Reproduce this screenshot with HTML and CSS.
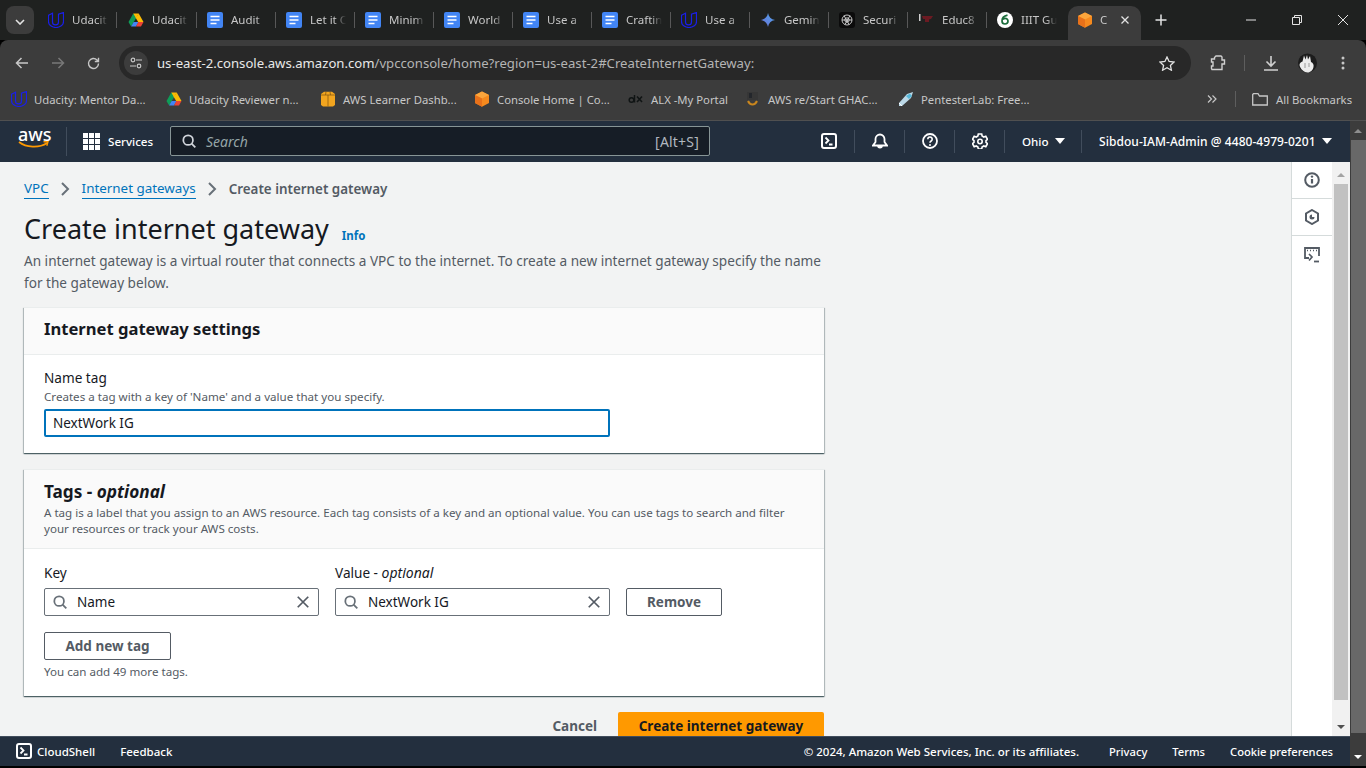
FILE: index.html
```html
<!DOCTYPE html>
<html lang="en">
<head>
  <meta charset="UTF-8" />
  <title>Create internet gateway | VPC Console</title>
  <link rel="stylesheet" href="styles.css">
</head>
<body>
  <svg class="defs" width="0" height="0">
    <symbol id="udacity" viewBox="0 0 16 16"><path d="M.5 3.200 4.500 1.200V10c0 1.700 1.300 2.900 3 2.900S10.500 11.700 10.500 10V2.200L15.500.5V9.500c0 3.500-3.400 6-7.500 6s-7.500-2.500-7.500-6zM4.500 10.500V3M10.500 9.500V3" fill="none" stroke="#1a1fe8" stroke-width="1.200"/></symbol>
    <symbol id="drive" viewBox="0 0 16 16"><path d="M5.300 1.500h5.400L8 6.300 5.300 6z" fill="#fbbc04"/><path d="M5.300 1.500 0.500 10l2.600 4.400L8 6.200z" fill="#0f9d58"/><path d="M10.700 1.500 15.500 10h-5.300L7.600 5.800z" fill="#fbbc04"/><path d="M3.100 14.400h4.900l2.700-4.400H5.600z" fill="#4285f4"/><path d="M15.500 10h-5.200L8 14.400h5z" fill="#ea4335"/></symbol>
    <symbol id="docs" viewBox="0 0 16 16"><rect width="16" height="16" rx="2" fill="#4285f4"/><path d="M3.500 4.500h9M3.500 8h9M3.500 11.500h6" stroke="#fff" stroke-width="1.600"/></symbol>
    <symbol id="gemini" viewBox="0 0 16 16"><defs><linearGradient id="gem" x1="0" y1="1" x2="1" y2="0"><stop offset="0" stop-color="#6b6fd4"/><stop offset="1" stop-color="#4fa6ee"/></linearGradient></defs><path d="M8 1c.6 3.800 3 6.300 7 7-4 .7-6.400 3.200-7 7-.6-3.800-3-6.300-7-7 4-.7 6.400-3.200 7-7z" fill="url(#gem)"/></symbol>
    <symbol id="openai" viewBox="0 0 16 16"><rect width="16" height="16" rx="3" fill="#0b0b0b"/><g fill="none" stroke="#d8d8d8" stroke-width=".9"><circle cx="8" cy="8" r="5"/><circle cx="8" cy="8" r="2.200"/><path d="M5 3.500 10 12.500M11 3.500 6 12.500M3 8h10"/></g></symbol>
    <symbol id="educ" viewBox="0 0 16 16"><path d="M1 2h1.500v7H1z" fill="#cfcfcf"/><path d="M4 4h11l-2 3-2 .5V10H7V7H5z" fill="#6b1a22"/></symbol>
    <symbol id="iiit" viewBox="0 0 16 16"><circle cx="8" cy="8" r="8" fill="#fff"/><path d="M10.500 3.200C7 4 5 6.500 5 9c0 1.700 1.200 3 3 3s3-1.300 3-2.900-1.200-2.700-2.800-2.700c-1 0-1.800.5-2.200 1.200" fill="none" stroke="#1c6d3c" stroke-width="1.700"/></symbol>
    <symbol id="cube" viewBox="0 0 16 16"><path d="M8 .5 15 4v8l-7 3.700L1 12V4z" fill="#f68a1e"/><path d="M8 .5 15 4 8 7.600 1 4z" fill="#fba53c"/><path d="M8 7.600V15.700L1 12V4z" fill="#e8711a"/></symbol>
    <symbol id="box" viewBox="0 0 16 16"><path d="M1 3 4 .8h8L15 3v11l-2 1.500H3L1 14z" fill="#f2a51f"/><path d="M1 4h14M8 4v11.500M6 .8 5.500 4M10 .8l.5 3.200" stroke="#8a5a10" stroke-width=".8" fill="none"/></symbol>
    <symbol id="alx" viewBox="0 0 16 16"><circle cx="3.500" cy="9" r="2.300" fill="none" stroke="#101414" stroke-width="1.500"/><path d="M6.500 4v7.500" stroke="#101414" stroke-width="1.500"/><path d="M9 5.500 14 11M14 5.500 9 11" stroke="#101414" stroke-width="1.600"/></symbol>
    <symbol id="restart" viewBox="0 0 16 16"><rect x="2" y="1" width="11" height="8" fill="#363636"/><path d="M4 2h3v5H4z" fill="#23262b"/><path d="M3 10c2 4.500 7 4.500 9 0" fill="none" stroke="#c9861e" stroke-width="2"/></symbol>
    <symbol id="pentester" viewBox="0 0 16 16"><path d="M15 1 13 7 4 15 1 15 1 12 9 3z" fill="#bcd9e8"/><path d="M12 2.500 14 5 11 8 8 5z" fill="#56b7d8"/><path d="M1 12 4 15" stroke="#fff"/></symbol>
    <symbol id="search" viewBox="0 0 16 16"><circle cx="7" cy="7" r="5.500" fill="none" stroke="currentColor" stroke-width="2"/><path d="m11 11 4.200 4.200" stroke="currentColor" stroke-width="2"/></symbol>
    <symbol id="clear" viewBox="0 0 16 16"><path d="m2 2 12 12M14 2 2 14" stroke="currentColor" stroke-width="2"/></symbol>
    <symbol id="shell" viewBox="0 0 16 16"><rect x="1" y="1" width="14" height="14" rx="2" fill="none" stroke="currentColor" stroke-width="2"/><path d="m4.500 4.500 3 3-3 3M8 11.500h3.500" fill="none" stroke="currentColor" stroke-width="1.800"/></symbol>
  </svg>

  <!-- browser tabs -->
  <div class="tabstrip">
    <button class="tab-menu"><svg width="10" height="6" viewBox="0 0 10 6"><path d="m1 1 4 4 4-4" fill="none" stroke="#e3e3e3" stroke-width="1.600"/></svg></button>
    <div class="tab tab-first"><svg class="fav"><use href="#udacity"/></svg><span class="tab-title">Udacit</span></div>
    <div class="tab"><svg class="fav"><use href="#drive"/></svg><span class="tab-title">Udacit</span></div>
    <div class="tab"><svg class="fav"><use href="#docs"/></svg><span class="tab-title">Audit</span></div>
    <div class="tab"><svg class="fav"><use href="#docs"/></svg><span class="tab-title">Let it C</span></div>
    <div class="tab"><svg class="fav"><use href="#docs"/></svg><span class="tab-title">Minim</span></div>
    <div class="tab"><svg class="fav"><use href="#docs"/></svg><span class="tab-title">World</span></div>
    <div class="tab"><svg class="fav"><use href="#docs"/></svg><span class="tab-title">Use a</span></div>
    <div class="tab"><svg class="fav"><use href="#docs"/></svg><span class="tab-title">Craftin</span></div>
    <div class="tab"><svg class="fav"><use href="#udacity"/></svg><span class="tab-title">Use a</span></div>
    <div class="tab"><svg class="fav"><use href="#gemini"/></svg><span class="tab-title">Gemin</span></div>
    <div class="tab"><svg class="fav"><use href="#openai"/></svg><span class="tab-title">Securi</span></div>
    <div class="tab"><svg class="fav"><use href="#educ"/></svg><span class="tab-title">Educ8</span></div>
    <div class="tab tab-last"><svg class="fav"><use href="#iiit"/></svg><span class="tab-title">IIIT Gu</span></div>
    <div class="tab tab-active"><svg class="fav"><use href="#cube"/></svg><span class="tab-title">C</span><svg class="tab-close" width="8" height="8" viewBox="0 0 8 8"><path d="m.5.5 7 7M7.500.5l-7 7" stroke="#e3e3e3" stroke-width="1.300"/></svg></div>
    <svg class="new-tab" width="12" height="12" viewBox="0 0 12 12"><path d="M6 .5v11M.5 6h11" stroke="#e3e3e3" stroke-width="1.500"/></svg>
    <div class="win-buttons">
      <svg width="10" height="10" viewBox="0 0 10 10"><path d="M0 5h10" stroke="#e3e3e3"/></svg>
      <svg width="10" height="10" viewBox="0 0 10 10"><path d="M.5 2.500h7v7h-7zM2.500 2.500V.5h7v7h-2" fill="none" stroke="#e3e3e3"/></svg>
      <svg width="10" height="10" viewBox="0 0 10 10"><path d="m0 0 10 10M10 0 0 10" stroke="#e3e3e3"/></svg>
    </div>
  </div>

  <!-- address bar -->
  <div class="toolbar">
    <svg class="tool" width="14" height="12" viewBox="0 0 14 12"><path d="M13 6H1.500M6.500 1l-5 5 5 5" fill="none" stroke="#c7c7c7" stroke-width="1.500"/></svg>
    <svg class="tool" width="14" height="12" viewBox="0 0 14 12"><path d="M1 6h11.500M7.500 1l5 5-5 5" fill="none" stroke="#787878" stroke-width="1.500"/></svg>
    <svg class="tool" width="13" height="13" viewBox="0 0 13 13"><path d="M11.500 6.500a5 5 0 1 1-1.500-3.600L11.500 4.500M11.500.8v3.700H7.800" fill="none" stroke="#c7c7c7" stroke-width="1.400"/></svg>
    <div class="omnibox">
      <span class="site-info"><svg width="12" height="12" viewBox="0 0 12 12"><g fill="none" stroke="#c7c7c7" stroke-width="1.200"><circle cx="3" cy="3" r="1.800"/><path d="M6 3h6M0 9h6"/><circle cx="9" cy="9" r="1.800"/></g></svg></span>
      <span class="url"><b>us-east-2.console.aws.amazon.com</b>/vpcconsole/home?region=us-east-2#CreateInternetGateway:</span>
      <svg class="star" width="16" height="15" viewBox="0 0 16 15"><path d="m8 1 2.100 4.500 4.900.6-3.600 3.300 1 4.800L8 11.800l-4.400 2.400 1-4.800L1 6.100l4.900-.6z" fill="none" stroke="#e3e3e3" stroke-width="1.300"/></svg>
    </div>
    <svg class="ext" width="16" height="16" viewBox="0 0 16 16"><path d="M1.500 4h3V2.500L6 1h5l1 1v3h2.500v4H12v5.500H2l-.5-1V11H3V7H1.500z" fill="none" stroke="#d0d0d0" stroke-width="1.400"/></svg>
    <span class="tool-sep"></span>
    <svg class="dl" width="16" height="16" viewBox="0 0 16 16"><path d="M8 1v9.500M3.500 6.500 8 11l4.500-4.500M1 15h14" fill="none" stroke="#d0d0d0" stroke-width="1.600"/></svg>
    <svg class="avatar" width="19" height="20" viewBox="0 0 19 20"><circle cx="9.500" cy="10" r="9.500" fill="#1c1c1c"/><path d="M1.500 12c0-2 1.500-3 3-3.500L6 2.500l1.500 4L9 2l1 4.500L12 3l1 6c2 1 3 2.500 2.500 5-.5 3-3 5.500-6 5.500S2 16 1.500 12z" fill="#ececec"/><path d="M7 10v5M11 10v4" stroke="#9a9a9a"/></svg>
    <svg class="dots" width="4" height="14" viewBox="0 0 4 14"><circle cx="2" cy="2" r="1.500" fill="#c7c7c7"/><circle cx="2" cy="7" r="1.500" fill="#c7c7c7"/><circle cx="2" cy="12" r="1.500" fill="#c7c7c7"/></svg>
  </div>

  <!-- bookmarks -->
  <div class="bookmarks">
    <a class="bm bm-mentor"><svg class="fav"><use href="#udacity"/></svg>Udacity: Mentor Da...</a>
    <a class="bm bm-reviewer"><svg class="fav"><use href="#drive"/></svg>Udacity Reviewer n...</a>
    <a class="bm bm-learner"><svg class="fav"><use href="#box"/></svg>AWS Learner Dashb...</a>
    <a class="bm bm-console"><svg class="fav"><use href="#cube"/></svg>Console Home | Co...</a>
    <a class="bm bm-alx"><svg class="fav"><use href="#alx"/></svg>ALX -My Portal</a>
    <a class="bm bm-restart"><svg class="fav"><use href="#restart"/></svg>AWS re/Start GHAC...</a>
    <a class="bm bm-pentester"><svg class="fav"><use href="#pentester"/></svg>PentesterLab: Free...</a>
    <svg class="bm-more" width="10" height="8" viewBox="0 0 10 8"><path d="m1 .5 3.500 3.500L1 7.500M5.500.5 9 4 5.500 7.500" fill="none" stroke="#c7c7c7" stroke-width="1.200"/></svg>
    <span class="bm-sep"></span>
    <a class="bm bm-all"><svg width="16" height="13" viewBox="0 0 16 13"><path d="M.7 1.500.7 12h14.600V3H7.500L6 .7H1.500z" fill="none" stroke="#c7c7c7" stroke-width="1.300"/></svg>All Bookmarks</a>
  </div>

  <div class="viewport">
    <div class="console">
      <!-- AWS top nav -->
      <header class="topnav">
        <div class="aws-logo">
          <span>aws</span>
          <svg width="31" height="8" viewBox="0 0 31 8"><path d="M1 1c7 5.500 20 6.500 28 1" fill="none" stroke="#f90" stroke-width="1.700"/><path d="m25.500.8 4.500-.2-1.200 4.200" fill="none" stroke="#f90" stroke-width="1.400"/></svg>
        </div>
        <div class="services">
          <span class="grid-icon"><i></i><i></i><i></i><i></i><i></i><i></i><i></i><i></i><i></i></span>
          Services
        </div>
        <div class="nav-search">
          <svg width="14" height="14"><use href="#search"/></svg>
          <em>Search</em>
          <span class="shortcut">[Alt+S]</span>
        </div>
        <div class="nav-icon nav-first"><svg width="16" height="16"><use href="#shell"/></svg></div>
        <div class="nav-icon">
          <svg width="16" height="16" viewBox="0 0 16 16"><path d="M1 12.500h14L12.500 9V6a4.500 4.500 0 0 0-9 0v3zM6 12.500a2 2 0 0 0 4 0" fill="none" stroke="#fff" stroke-width="1.800"/></svg>
        </div>
        <div class="nav-icon">
          <svg width="16" height="16" viewBox="0 0 16 16"><circle cx="8" cy="8" r="7" fill="none" stroke="#fff" stroke-width="1.800"/><path d="M5.800 6.200a2.200 2.200 0 1 1 3.400 1.800c-.8.500-1.200 1-1.200 1.800" fill="none" stroke="#fff" stroke-width="1.600"/><circle cx="8" cy="12" r="1" fill="#fff"/></svg>
        </div>
        <div class="nav-icon">
          <svg width="16" height="16" viewBox="0 0 16 16"><path d="m6.300 1h3.400l.4 2 1.700 1 2-.7 1.700 3-1.500 1.300v1.800l1.500 1.300-1.700 3-2-.7-1.700 1-.4 2H6.300l-.4-2-1.700-1-2 .7-1.700-3 1.500-1.300V7.600L.5 6.300l1.700-3 2 .7 1.700-1z" fill="none" stroke="#fff" stroke-width="1.600"/><circle cx="8" cy="8.500" r="2.200" fill="none" stroke="#fff" stroke-width="1.600"/></svg>
        </div>
        <div class="nav-menu nav-region">Ohio<span class="caret"></span></div>
        <div class="nav-menu nav-account">Sibdou-IAM-Admin @ 4480-4979-0201<span class="caret"></span></div>
      </header>

      <div class="workspace">
        <main class="content">
          <nav class="crumbs">
            <a>VPC</a>
            <svg width="9" height="14" viewBox="0 0 9 14"><path d="m1 1 6 6-6 6" fill="none" stroke="#687078" stroke-width="2"/></svg>
            <a>Internet gateways</a>
            <svg width="9" height="14" viewBox="0 0 9 14"><path d="m1 1 6 6-6 6" fill="none" stroke="#687078" stroke-width="2"/></svg>
            <span>Create internet gateway</span>
          </nav>

          <div class="page-head">
            <h1>Create internet gateway</h1>
            <a class="info">Info</a>
          </div>
          <p class="page-desc">An internet gateway is a virtual router that connects a VPC to the internet. To create a new internet gateway specify the name for the gateway below.</p>

          <section class="card">
            <div class="card-head">
              <h2>Internet gateway settings</h2>
            </div>
            <div class="card-body body-settings">
              <label class="field-label">Name tag</label>
              <div class="field-hint">Creates a tag with a key of 'Name' and a value that you specify.</div>
              <input class="text-input focused" type="text" value="NextWork IG">
            </div>
          </section>

          <section class="card">
            <div class="card-head head-tags">
              <h2>Tags - <em>optional</em></h2>
              <p>A tag is a label that you assign to an AWS resource. Each tag consists of a key and an optional value. You can use tags to search and filter your resources or track your AWS costs.</p>
            </div>
            <div class="card-body body-tags">
              <div class="tag-row">
                <div class="tag-col">
                  <label class="field-label">Key</label>
                  <div class="search-input">
                    <svg width="14" height="14"><use href="#search"/></svg>
                    <span>Name</span>
                    <svg class="clear" width="14" height="14"><use href="#clear"/></svg>
                  </div>
                </div>
                <div class="tag-col">
                  <label class="field-label">Value - <em>optional</em></label>
                  <div class="search-input">
                    <svg width="14" height="14"><use href="#search"/></svg>
                    <span>NextWork IG</span>
                    <svg class="clear" width="14" height="14"><use href="#clear"/></svg>
                  </div>
                </div>
                <button class="btn btn-remove">Remove</button>
              </div>
              <button class="btn btn-add">Add new tag</button>
              <div class="more-hint">You can add 49 more tags.</div>
            </div>
          </section>

          <div class="form-actions">
            <a class="cancel">Cancel</a>
            <button class="btn-primary">Create internet gateway</button>
          </div>
        </main>

        <aside class="tools-panel">
          <div class="panel-icon">
            <svg width="16" height="16" viewBox="0 0 16 16"><circle cx="8" cy="8" r="6.800" fill="none" stroke="#545b64" stroke-width="2"/><path d="M8 7v4.500" stroke="#545b64" stroke-width="2.200"/><circle cx="8" cy="4.600" r="1.200" fill="#545b64"/></svg>
          </div>
          <div class="panel-icon">
            <svg width="16" height="16" viewBox="0 0 16 16"><path d="M8 1 14 4.500v7L8 15l-6-3.500v-7z" fill="none" stroke="#545b64" stroke-width="2"/><path d="M8 5.500a2.500 2.500 0 1 0 2.500 2.500H8z" fill="#545b64"/></svg>
          </div>
          <div class="panel-icon panel-last">
            <svg width="16" height="16" viewBox="0 0 16 16"><path d="M5 11H1V1h14v8" fill="none" stroke="#545b64" stroke-width="1.800"/><path d="M3 3.500h1M6 3.500h1M9 3.500h1M12 3.500h1" stroke="#545b64" stroke-width="1.500"/><path d="m5 7 3 3-3 3.500" fill="none" stroke="#545b64" stroke-width="1.700"/><path d="M10 14.500h5" stroke="#545b64" stroke-width="1.800"/></svg>
          </div>
        </aside>

        <div class="inner-scroll">
          <span class="arrow-up"></span>
          <span class="inner-thumb"></span>
          <span class="arrow-down"></span>
        </div>
      </div>

      <footer class="footer">
        <a class="foot-shell"><svg width="16" height="16"><use href="#shell"/></svg>CloudShell</a>
        <a class="foot-feedback">Feedback</a>
        <span class="foot-copy">© 2024, Amazon Web Services, Inc. or its affiliates.</span>
        <a class="foot-link">Privacy</a>
        <a class="foot-link">Terms</a>
        <a class="foot-link">Cookie preferences</a>
      </footer>
    </div>

    <div class="outer-scroll">
      <span class="outer-up"></span>
      <span class="outer-thumb"></span>
      <span class="outer-down"></span>
    </div>
  </div>
  <div class="bottom-edge"></div>
</body>
</html>
```

FILE: styles.css
```css
* {
  box-sizing: border-box;
}

html,
body {
  margin: 0;
  height: 768px;
  overflow: hidden;
}

body {
  display: flex;
  flex-direction: column;
  background-color: #000;
  font-family: 'Noto Sans', 'Open Sans', sans-serif;
}

.defs {
  position: absolute;
}

.fav {
  width: 16px;
  height: 16px;
  flex: none;
}

/* tabs */
.tabstrip {
  height: 40px;
  flex: none;
  display: flex;
  align-items: center;
  padding-left: 6px;
  background-color: #1f2120;
  color: #c7c7c7;
  font-size: 11.5px;
}

.tab-menu {
  width: 28px;
  height: 28px;
  margin-right: 6px;
  padding: 0;
  border: none;
  border-radius: 8px;
  background-color: #3c3c3c;
}

.tab {
  width: 79px;
  height: 40px;
  flex: none;
  display: flex;
  align-items: center;
  padding-left: 8px;
  gap: 8px;
  position: relative;
}

.tab-first {
  width: 80px;
}

.tab::after {
  content: '';
  position: absolute;
  right: 2px;
  top: 12px;
  height: 16px;
  width: 1px;
  background-color: #585858;
}

.tab-first::after {
  right: 3px;
}

.tab-last::after,
.tab-active::after {
  display: none;
}

.tab-title {
  width: 36px;
  padding-bottom: 2px;
  white-space: nowrap;
  -webkit-mask-image: linear-gradient(to right, #000 70%, transparent);
  mask-image: linear-gradient(to right, #000 70%, transparent);
}

.tab-active {
  width: 73px;
  margin-top: 6px;
  height: 34px;
  padding: 0 0 6px 9px;
  gap: 7px;
  background-color: #3c3c3c;
  border-radius: 10px 10px 0 0;
}

.tab-active .tab-title {
  width: 9px;
}

.tab-close {
  margin-left: 5px;
  flex: none;
}

.new-tab {
  margin-left: 14px;
}

.win-buttons {
  margin-left: auto;
  display: flex;
  gap: 36px;
  padding-right: 18px;
}

/* address bar */
.toolbar {
  height: 44px;
  flex: none;
  display: flex;
  align-items: center;
  padding: 2px 0 0 15px;
  background-color: #3c3c3c;
  border-radius: 8px 8px 0 0;
}

.tool {
  margin-right: 22px;
  flex: none;
}

.omnibox {
  width: 1072px;
  height: 34px;
  margin-left: -3px;
  display: flex;
  align-items: center;
  padding: 0 16px 0 5px;
  background-color: #282828;
  border-radius: 17px;
}

.site-info {
  width: 24px;
  height: 24px;
  display: flex;
  align-items: center;
  justify-content: center;
  background-color: #3c3c3c;
  border-radius: 50%;
  margin-right: 9px;
}

.url {
  color: #b4b4b4;
  font-size: 13.15px;
  white-space: nowrap;
  flex: 1;
}

.url b {
  color: #e8e8e8;
  font-weight: 400;
}

.ext {
  margin-left: 19px;
}

.tool-sep {
  width: 1px;
  height: 16px;
  margin: 0 18px;
  background-color: #5e5e5e;
}

.avatar {
  margin-left: 19px;
}

.dots {
  margin-left: 24px;
}

/* bookmarks bar */
.bookmarks {
  height: 37px;
  flex: none;
  display: flex;
  align-items: center;
  padding: 0 0 6px 11px;
  background-color: #3c3c3c;
  border-bottom: 1px solid #505050;
  color: #c7c7c7;
  font-size: 11.3px;
}

.bm {
  display: flex;
  align-items: center;
  gap: 7px;
  white-space: nowrap;
  flex: none;
}

.bm-mentor { width: 155px; }
.bm-reviewer { width: 154px; }
.bm-learner { width: 154px; }
.bm-console { width: 154px; }
.bm-alx { width: 117px; }
.bm-restart { width: 153px; }
.bm-pentester { width: 309px; }

.bm-more {
  flex: none;
}

.bm-sep {
  width: 1px;
  height: 16px;
  margin: 0 16px 0 18px;
  background-color: #5e5e5e;
}

.bm-all {
  gap: 8px;
}

/* page frame */
.viewport {
  flex: 1;
  min-height: 0;
  display: flex;
}

.console {
  flex: 1;
  min-width: 0;
  display: flex;
  flex-direction: column;
}

.topnav {
  height: 41px;
  flex: none;
  display: flex;
  align-items: center;
  padding-bottom: 1px;
  background-color: #232f3e;
  color: #fff;
  font-size: 11.6px;
  font-weight: 500;
}

.aws-logo {
  width: 67px;
  height: 29px;
  padding-left: 18px;
  border-right: 1px solid #414d5c;
  display: flex;
  flex-direction: column;
  line-height: 15px;
  font-size: 18px;
}

.aws-logo svg {
  margin-top: -1px;
}

.services {
  width: 103px;
  display: flex;
  align-items: center;
  gap: 8px;
  padding-left: 16px;
}

.grid-icon {
  width: 17px;
  height: 17px;
  display: grid;
  grid-template-columns: repeat(3, 5px);
  gap: 1px;
}

.grid-icon i {
  background-color: #fff;
}

.nav-search {
  width: 540px;
  height: 30px;
  display: flex;
  align-items: center;
  gap: 10px;
  padding: 0 10px 0 11px;
  background-color: #161d26;
  border: 1px solid #879596;
  border-radius: 2px;
  color: #d1d5db;
  font-size: 14px;
  font-weight: 400;
}

.nav-search em {
  color: #95a5a6;
}

.shortcut {
  margin-left: auto;
  color: #b0b7bf;
  letter-spacing: 0.2px;
}

.nav-icon {
  width: 50px;
  height: 23px;
  display: flex;
  align-items: center;
  justify-content: center;
  border-left: 1px solid #414d5c;
}

.nav-first {
  margin-left: auto;
  border-left: none;
}

.nav-menu {
  height: 23px;
  display: flex;
  align-items: center;
  gap: 6px;
  border-left: 1px solid #414d5c;
  white-space: nowrap;
}

.nav-region {
  width: 77px;
  padding-left: 17px;
}

.nav-account {
  width: 269px;
  flex: none;
  padding-left: 17px;
  font-size: 12px;
  letter-spacing: 0.05px;
}

.caret {
  width: 0;
  height: 0;
  border-left: 5px solid transparent;
  border-right: 5px solid transparent;
  border-top: 6px solid #fff;
}

.workspace {
  flex: 1;
  min-height: 0;
  display: flex;
  background-color: #f2f3f3;
}

.content {
  flex: 1;
  min-width: 0;
  padding: 16px 0 0 24px;
  overflow: hidden;
  color: #16191f;
}

.crumbs {
  height: 22px;
  display: flex;
  align-items: center;
  gap: 12px;
  font-size: 13.4px;
}

.crumbs a {
  color: #0073bb;
  border-bottom: 1px solid #0073bb;
  line-height: 19px;
}

.crumbs span {
  color: #545b64;
  font-weight: 600;
}

.page-head {
  margin-top: 11px;
  height: 36px;
  display: flex;
  align-items: center;
  gap: 13px;
}

h1 {
  margin: 0;
  font-size: 27px;
  font-weight: 400;
  line-height: 36px;
}

.info {
  margin-top: 12px;
  color: #0073bb;
  font-size: 11.5px;
  font-weight: 700;
}

.page-desc {
  width: 801px;
  margin: 3px 0 13px;
  color: #545b64;
  font-size: 13.6px;
  line-height: 22px;
}

.card {
  width: 800px;
  margin-bottom: 16px;
  background-color: #fff;
  border-top: 1px solid #eaeded;
  box-shadow: 0 1px 1px 0 rgba(0, 28, 36, 0.5), 1px 1px 1px 0 rgba(0, 28, 36, 0.2), -1px 1px 1px 0 rgba(0, 28, 36, 0.2);
}

.card-head {
  height: 47px;
  padding: 10px 20px 0;
  background-color: #fafafa;
  border-bottom: 1px solid #eaeded;
}

h2 {
  margin: 0;
  font-size: 16.6px;
  font-weight: 700;
  line-height: 22px;
}

h2 em {
  font-weight: 700;
}

.head-tags {
  height: 79px;
  padding-top: 11px;
}

.head-tags h2 {
  font-size: 17.2px;
}

.head-tags p {
  margin: 2px 0 0;
  color: #545b64;
  font-size: 11.6px;
  line-height: 16px;
}

.card-body {
  padding: 0 20px;
}

.body-settings {
  height: 98px;
  padding-top: 13px;
}

.body-tags {
  height: 147px;
  padding-top: 14px;
}

.field-label {
  display: block;
  font-size: 13.6px;
  line-height: 19px;
}

.field-label em {
  font-size: 14px;
  font-style: italic;
}

.field-hint {
  margin-top: 2px;
  color: #545b64;
  font-size: 11.6px;
  line-height: 16px;
}

.more-hint {
  color: #545b64;
  font-size: 11.6px;
  line-height: 16px;
}

.text-input {
  display: block;
  width: 566px;
  height: 28px;
  margin-top: 4px;
  padding: 0 7px;
  border: 2px solid #0073bb;
  border-radius: 2px;
  outline: none;
  color: #16191f;
  font-family: inherit;
  font-size: 13.5px;
}

.tag-row {
  display: flex;
  align-items: flex-end;
  gap: 16px;
}

.tag-col {
  width: 275px;
}

.search-input {
  height: 28px;
  margin-top: 6px;
  display: flex;
  align-items: center;
  gap: 10px;
  padding: 0 8px;
  border: 1px solid #687078;
  border-radius: 2px;
  color: #16191f;
  font-size: 13.5px;
}

.search-input svg {
  flex: none;
  color: #687078;
}

.search-input .clear {
  margin-left: auto;
  color: #545b64;
}

.btn {
  height: 28px;
  padding: 0;
  background-color: #fff;
  border: 1px solid #545b64;
  border-radius: 2px;
  color: #545b64;
  font-family: inherit;
  font-size: 13.5px;
  font-weight: 700;
}

.btn-remove {
  width: 96px;
}

.btn-add {
  display: block;
  width: 127px;
  margin: 16px 0 4px;
}

.form-actions {
  width: 800px;
  display: flex;
  align-items: center;
  justify-content: flex-end;
  gap: 21px;
  margin-top: 15px;
}

.cancel {
  color: #545b64;
  font-size: 13.5px;
  font-weight: 700;
}

.btn-primary {
  width: 206px;
  height: 28px;
  flex: none;
  padding: 0;
  background-color: #ff9900;
  border: none;
  border-radius: 2px;
  color: #16191f;
  font-family: inherit;
  font-size: 13.5px;
  font-weight: 700;
}

/* help panel */
.tools-panel {
  width: 41px;
  flex: none;
  background-color: #fff;
  border-left: 1px solid #d5dbdb;
}

.panel-icon {
  height: 37px;
  display: flex;
  align-items: center;
  justify-content: center;
  border-bottom: 1px solid #d5dbdb;
}

.panel-last {
  border-bottom: none;
}

.inner-scroll {
  width: 18px;
  flex: none;
  display: flex;
  flex-direction: column;
  align-items: center;
  background-color: #f1f1f1;
}

.arrow-up,
.arrow-down {
  width: 0;
  height: 0;
  flex: none;
  border-left: 4px solid transparent;
  border-right: 4px solid transparent;
}

.arrow-up {
  margin: 11px 0 7px;
  border-bottom: 4px solid #a3a3a3;
}

.arrow-down {
  margin: 25px 0 7px;
  border-top: 4px solid #505050;
}

.inner-thumb {
  flex: 1;
  width: 14px;
  background-color: #c1c1c1;
}

.footer {
  height: 30px;
  flex: none;
  display: flex;
  align-items: center;
  gap: 25px;
  padding: 0 17px 1px 16px;
  background-color: #232f3e;
  border-top: 1px solid #414d5c;
  color: #fff;
  font-size: 11.5px;
  font-weight: 500;
  white-space: nowrap;
}

.foot-shell {
  display: flex;
  align-items: center;
  gap: 5px;
}

.foot-copy {
  margin-left: auto;
  margin-right: 5px;
}

.foot-link {
  font-size: 11.2px;
}

.outer-scroll {
  width: 16px;
  flex: none;
  display: flex;
  flex-direction: column;
  align-items: center;
  background-color: #3c3c3c;
}

.outer-up,
.outer-down {
  width: 0;
  height: 0;
  flex: none;
  border-left: 4px solid transparent;
  border-right: 4px solid transparent;
}

.outer-up {
  margin: 8px 0 7px;
  border-bottom: 4px solid #8e8e8e;
}

.outer-down {
  margin: 22px 0 7px;
  border-top: 4px solid #fff;
}

.outer-thumb {
  flex: 1;
  width: 15px;
  background-color: #686868;
}

.bottom-edge {
  height: 2px;
  flex: none;
  background-color: #000;
}
```
